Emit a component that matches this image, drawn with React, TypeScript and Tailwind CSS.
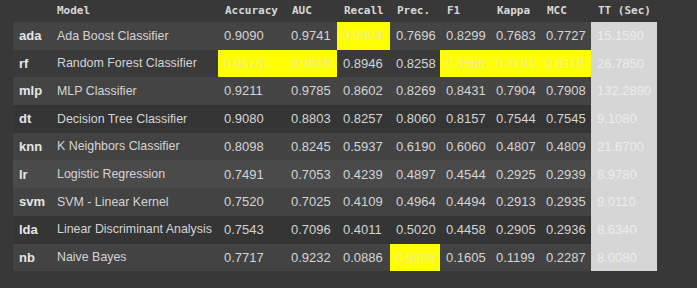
import React from 'react';

type Row = {
  id: string;
  model: string;
  values: string[];
  hl: number[];
  bg: string;
};

// column widths, index + model + 8 metrics
const cols = ['w-[37px]', 'w-[168px]', 'w-[67px]', 'w-[52px]', 'w-[53px]', 'w-[50px]', 'w-[50px]', 'w-[50px]', 'w-[51px]', 'w-[66px]'];

const headers = ['', 'Model', 'Accuracy', 'AUC', 'Recall', 'Prec.', 'F1', 'Kappa', 'MCC', 'TT (Sec)'];

const rows: Row[] = [
  { id: 'ada', model: 'Ada Boost Classifier', values: ['0.9090', '0.9741', '0.9004', '0.7696', '0.8299', '0.7683', '0.7727', '15.1590'], hl: [2], bg: 'bg-[#444444]' },
  { id: 'rf', model: 'Random Forest Classifier', values: ['0.9376', '0.9826', '0.8946', '0.8258', '0.8586', '0.8101', '0.8115', '26.7850'], hl: [0, 1, 4, 5, 6], bg: 'bg-[#3a3a3a]' },
  { id: 'mlp', model: 'MLP Classifier', values: ['0.9211', '0.9785', '0.8602', '0.8269', '0.8431', '0.7904', '0.7908', '132.2890'], hl: [], bg: 'bg-[#444444]' },
  { id: 'dt', model: 'Decision Tree Classifier', values: ['0.9080', '0.8803', '0.8257', '0.8060', '0.8157', '0.7544', '0.7545', '9.1080'], hl: [], bg: 'bg-[#353535]' },
  { id: 'knn', model: 'K Neighbors Classifier', values: ['0.8098', '0.8245', '0.5937', '0.6190', '0.6060', '0.4807', '0.4809', '21.6700'], hl: [], bg: 'bg-[#434343]' },
  { id: 'lr', model: 'Logistic Regression', values: ['0.7491', '0.7053', '0.4239', '0.4897', '0.4544', '0.2925', '0.2939', '8.9780'], hl: [], bg: 'bg-[#4a4a4a]' },
  { id: 'svm', model: 'SVM - Linear Kernel', values: ['0.7520', '0.7025', '0.4109', '0.4964', '0.4494', '0.2913', '0.2935', '9.0110'], hl: [], bg: 'bg-[#434343]' },
  { id: 'lda', model: 'Linear Discriminant Analysis', values: ['0.7543', '0.7096', '0.4011', '0.5020', '0.4458', '0.2905', '0.2936', '8.6340'], hl: [], bg: 'bg-[#353535]' },
  { id: 'nb', model: 'Naive Bayes', values: ['0.7717', '0.9232', '0.0886', '0.8886', '0.1605', '0.1199', '0.2287', '8.0080'], hl: [3], bg: 'bg-[#434343]' },
];

export default function App() {
  return (
    <div className="w-[697px] h-[288px] bg-[#383838] overflow-hidden pl-[13px]">
      <div className="flex flex-col w-[644px]">
        {/* header */}
        <div className="flex h-[22px] items-center font-['DejaVu_Sans_Mono','Liberation_Mono',monospace] text-[11px] font-bold text-[#d8d8d8]">
          {headers.map((h, i) => (
            <div key={i} className={`${cols[i]} shrink-0 pl-[7px] whitespace-pre`}>
              {h}
            </div>
          ))}
        </div>

        {rows.map((r) => (
          <div key={r.id} className={`flex h-[27.7px] ${r.bg} font-['Liberation_Sans',Arial,sans-serif] text-[13px] text-[#d4d4d4]`}>
            <div className={`${cols[0]} shrink-0 pl-[6px] flex items-center font-bold text-[#e6e6e6]`}>{r.id}</div>
            <div className={`${cols[1]} shrink-0 pl-[7px] flex items-center whitespace-nowrap text-[12.4px]`}>{r.model}</div>
            {r.values.map((v, i) => {
              const isTT = i === 7;
              const yellow = r.hl.includes(i);
              return (
                <div
                  key={i}
                  className={`${cols[i + 2]} shrink-0 pl-[6px] flex items-center ${
                    isTT ? 'bg-[#d6d6d6] text-[#ececec]' : yellow ? 'bg-[#ffff00] text-[#eeee99]' : ''
                  }`}
                >
                  {v}
                </div>
              );
            })}
          </div>
        ))}
      </div>
    </div>
  );
}
